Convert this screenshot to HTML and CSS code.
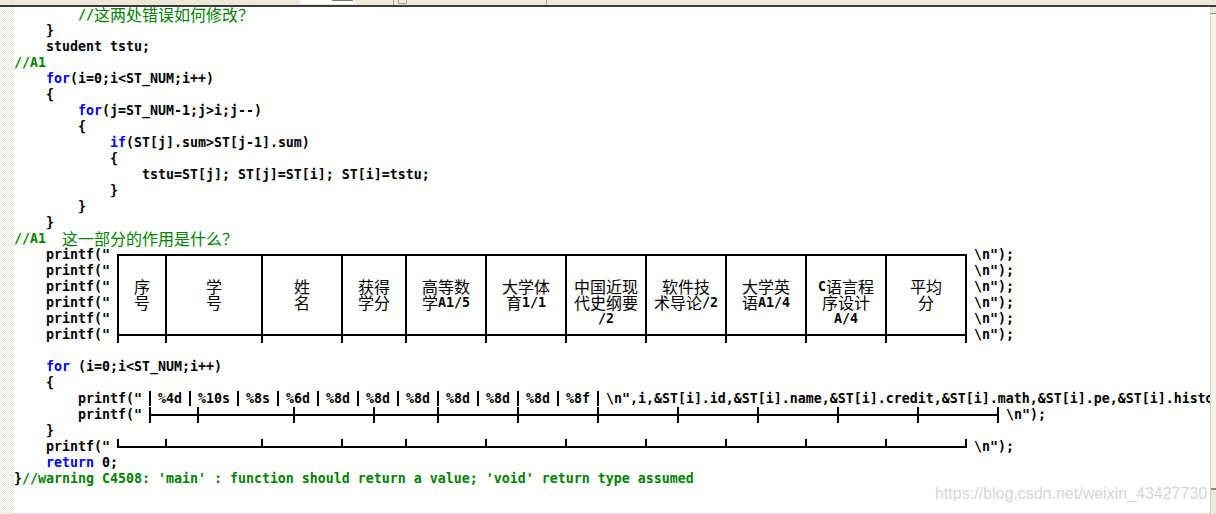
FILE: index.html
```html
<!DOCTYPE html>
<html lang="zh">
<head>
    <meta charset="UTF-8">
    <meta name="viewport" content="width=device-width, initial-scale=1.0">
    <title>student.cpp</title>
    <link rel="stylesheet" href="styles.css">
</head>
<body>
    <div class="window">
        <!-- toolbar remains at the top -->
        <div class="toolbar">
            <span class="tb-field"><span class="tb-field-bar"></span></span>
            <span class="tb-sep tb-sep-a"></span>
            <span class="tb-glyph"></span>
            <span class="tb-sep tb-sep-b"></span>
        </div>

        <div class="editor">
            <div class="gutter"></div>

            <div class="code">
                <div class="ln">        <span class="cm">//<span class="zh">这两处错误如何修改？</span></span></div>
                <div class="ln">    }</div>
                <div class="ln">    student tstu;</div>
                <div class="ln"><span class="cm">//A1</span></div>
                <div class="ln">    <span class="kw">for</span>(i=0;i&lt;ST_NUM;i++)</div>
                <div class="ln">    {</div>
                <div class="ln">        <span class="kw">for</span>(j=ST_NUM-1;j&gt;i;j--)</div>
                <div class="ln">        {</div>
                <div class="ln">            <span class="kw">if</span>(ST[j].sum&gt;ST[j-1].sum)</div>
                <div class="ln">            {</div>
                <div class="ln">                tstu=ST[j]; ST[j]=ST[i]; ST[i]=tstu;</div>
                <div class="ln">            }</div>
                <div class="ln">        }</div>
                <div class="ln">    }</div>
                <div class="ln"><span class="cm">//A1  <span class="zh">这一部分的作用是什么？</span></span></div>

                <!-- table header printed by six printf lines -->
                <div class="tbl-block">
                    <div class="tbl-left">
                        <div class="ln">    printf("</div>
                        <div class="ln">    printf("</div>
                        <div class="ln">    printf("</div>
                        <div class="ln">    printf("</div>
                        <div class="ln">    printf("</div>
                        <div class="ln">    printf("</div>
                    </div>
                    <div class="thead">
                        <div class="thead-inner">
                            <div class="th w3"><div class="th-cap">
                                <div class="cl"><span class="zh">序</span></div>
                                <div class="cl"><span class="zh">号</span></div>
                            </div></div>
                            <div class="th w6"><div class="th-cap">
                                <div class="cl"><span class="zh">学</span></div>
                                <div class="cl"><span class="zh">号</span></div>
                            </div></div>
                            <div class="th w5"><div class="th-cap">
                                <div class="cl"><span class="zh">姓</span></div>
                                <div class="cl"><span class="zh">名</span></div>
                            </div></div>
                            <div class="th w4"><div class="th-cap">
                                <div class="cl"><span class="zh">获得</span></div>
                                <div class="cl"><span class="zh">学分</span></div>
                            </div></div>
                            <div class="th w5"><div class="th-cap">
                                <div class="cl"><span class="zh">高等数</span></div>
                                <div class="cl"><span class="zh">学</span>A1/5</div>
                            </div></div>
                            <div class="th w5"><div class="th-cap">
                                <div class="cl"><span class="zh">大学体</span></div>
                                <div class="cl"><span class="zh">育</span>1/1</div>
                            </div></div>
                            <div class="th w5"><div class="th-cap">
                                <div class="cl"><span class="zh">中国近现</span></div>
                                <div class="cl"><span class="zh">代史纲要</span></div>
                                <div class="cl">/2</div>
                            </div></div>
                            <div class="th w5"><div class="th-cap">
                                <div class="cl"><span class="zh">软件技</span></div>
                                <div class="cl"><span class="zh">术导论</span>/2</div>
                            </div></div>
                            <div class="th w5"><div class="th-cap">
                                <div class="cl"><span class="zh">大学英</span></div>
                                <div class="cl"><span class="zh">语</span>A1/4</div>
                            </div></div>
                            <div class="th w5"><div class="th-cap">
                                <div class="cl">C<span class="zh">语言程</span></div>
                                <div class="cl"><span class="zh">序设计</span></div>
                                <div class="cl">A/4</div>
                            </div></div>
                            <div class="th w5"><div class="th-cap">
                                <div class="cl"><span class="zh">平均</span></div>
                                <div class="cl"><span class="zh">分</span></div>
                            </div></div>
                        </div>
                    </div>
                    <div class="tbl-right">
                        <div class="ln">\n");</div>
                        <div class="ln">\n");</div>
                        <div class="ln">\n");</div>
                        <div class="ln">\n");</div>
                        <div class="ln">\n");</div>
                        <div class="ln">\n");</div>
                    </div>
                </div>

                <div class="ln"></div>
                <div class="ln">    <span class="kw">for</span> (i=0;i&lt;ST_NUM;i++)</div>
                <div class="ln">    {</div>
                <div class="ln">        printf("<span class="vb"></span>%4d<span class="vb"></span>%10s<span class="vb"></span>%8s<span class="vb"></span>%6d<span class="vb"></span>%8d<span class="vb"></span>%8d<span class="vb"></span>%8d<span class="vb"></span>%8d<span class="vb"></span>%8d<span class="vb"></span>%8d<span class="vb"></span>%8f<span class="vb"></span>\n",i,&amp;ST[i].id,&amp;ST[i].name,&amp;ST[i].credit,&amp;ST[i].math,&amp;ST[i].pe,&amp;ST[i].history,&amp;ST[i].soft,&amp;ST[i].english,&amp;ST[i].c,&amp;ST[i].ave);</div>
                <div class="ln">        printf("<span class="rule rule-mid"><span class="seg w3"></span><span class="seg w6"></span><span class="seg w5"></span><span class="seg w4"></span><span class="seg w5"></span><span class="seg w5"></span><span class="seg w5"></span><span class="seg w5"></span><span class="seg w5"></span><span class="seg w5"></span><span class="seg end"></span></span>\n");</div>
                <div class="ln">    }</div>
                <div class="ln">    printf("<span class="rule rule-bot"><span class="seg w3"></span><span class="seg w6"></span><span class="seg w5"></span><span class="seg w4"></span><span class="seg w5"></span><span class="seg w5"></span><span class="seg w5"></span><span class="seg w5"></span><span class="seg w5"></span><span class="seg w5"></span><span class="seg end"></span></span>\n");</div>
                <div class="ln">    <span class="kw">return</span> 0;</div>
                <div class="ln">}<span class="cm">//warning C4508: 'main' : function should return a value; 'void' return type assumed</span></div>
            </div>

            <div class="vscroll">
                <div class="vs-arrow"></div>
                <div class="vs-track"></div>
                <div class="vs-thumb"></div>
            </div>
        </div>

        <div class="watermark">https://blog.csdn.net/weixin_43427730</div>
    </div>
</body>
</html>
```

FILE: styles.css
```css
body {
    margin: 0;
    background-color: #ffffff;
}

.window {
    position: relative;
    width: 1216px;
    height: 514px;
    overflow: hidden;
    background-color: #ffffff;
}

/* Toolbar strip */
.toolbar {
    display: flex;
    height: 5px;
    background-color: #ece9d8;
    border-bottom: 2px solid #3c3c3c;
}

.tb-field {
    display: block;
    margin-left: 300px;
    width: 55px;
    height: 4px;
    background-color: #ffffff;
}

.tb-field-bar {
    display: block;
    margin-left: 32px;
    width: 21px;
    height: 1px;
    background-color: #7a7869;
}

.tb-sep {
    display: block;
    width: 1px;
    height: 5px;
    background-color: #a6a393;
}

.tb-sep-a {
    margin-left: 38px;
}

.tb-glyph {
    display: block;
    margin-left: 4px;
    width: 7px;
    height: 3px;
    border: 1px solid #a6a393;
    border-top: none;
}

.tb-sep-b {
    margin-left: 139px;
}

/* Editor */
.editor {
    display: flex;
    height: 507px;
}

.gutter {
    width: 14px;
    flex: none;
    background: repeating-conic-gradient(#e6e5de 0 25%, #ffffff 0 50%) 0 0 / 2px 2px;
}

.code {
    flex: 1;
    height: 506px;
    overflow: hidden;
    border-bottom: 1px dotted #c4c4c4;
    font-family: "DejaVu Sans Mono", monospace;
    font-weight: bold;
    font-size: 13.29px;
    line-height: 16px;
    color: #000000;
}

.ln {
    height: 16px;
    white-space: pre;
}

.kw {
    color: #0000ff;
}

.cm {
    color: #008000;
}

.zh {
    font-family: "Noto Sans CJK SC", sans-serif;
    font-weight: normal;
    font-size: 16px;
    line-height: 0;
    vertical-align: -2px;
}

/* Header table */
.tbl-block {
    display: flex;
}

.tbl-left {
    width: 96px;
    flex: none;
}

.thead {
    width: 864px;
    height: 96px;
    flex: none;
    padding: 7px 7px 0;
    box-sizing: border-box;
}

.thead-inner {
    display: flex;
    height: 89px;
    box-sizing: border-box;
    border-top: 2px solid #000000;
    border-right: 2px solid #000000;
}

.th {
    flex: none;
    box-sizing: border-box;
    border-left: 2px solid #000000;
}

.th-cap {
    height: 80px;
    box-sizing: border-box;
    padding-top: 23px;
    border-bottom: 2px solid #000000;
}

.cl {
    height: 16px;
    text-align: center;
    white-space: pre;
}

.w3 { width: 48px; }
.w4 { width: 64px; }
.w5 { width: 80px; }
.w6 { width: 96px; }

/* Box drawing in printf strings */
.vb {
    display: inline-block;
    width: 16px;
    height: 16px;
    vertical-align: top;
    background: linear-gradient(#000, #000) 7px 0 / 2px 15px no-repeat;
}

.rule {
    display: inline-flex;
    height: 16px;
    padding: 0 7px;
    vertical-align: top;
}

.seg {
    display: block;
    flex: none;
    height: 16px;
}

.seg.end {
    width: 82px;
}

.rule-mid .seg {
    background:
        linear-gradient(#000, #000) 0 7px / 100% 2px no-repeat,
        linear-gradient(#000, #000) 0 0 / 2px 16px no-repeat;
}

.rule-mid .seg.end {
    background:
        linear-gradient(#000, #000) 0 7px / 100% 2px no-repeat,
        linear-gradient(#000, #000) 0 0 / 2px 16px no-repeat,
        linear-gradient(#000, #000) 100% 0 / 2px 16px no-repeat;
}

.rule-bot .seg {
    background:
        linear-gradient(#000, #000) 0 7px / 100% 2px no-repeat,
        linear-gradient(#000, #000) 0 0 / 2px 9px no-repeat;
}

.rule-bot .seg.end {
    background:
        linear-gradient(#000, #000) 0 7px / 100% 2px no-repeat,
        linear-gradient(#000, #000) 0 0 / 2px 9px no-repeat,
        linear-gradient(#000, #000) 100% 0 / 2px 9px no-repeat;
}

/* Vertical scrollbar, only a sliver is visible */
.vscroll {
    width: 5px;
    flex: none;
    display: flex;
    flex-direction: column;
    background-color: #ece9d8;
    border-left: 1px solid #d9d6c6;
}

.vs-arrow {
    height: 6px;
    border-bottom: 1px solid #8a8778;
}

.vs-track {
    flex: 1;
    background-color: #f4f3ee;
}

.vs-thumb {
    height: 24px;
    border-top: 2px solid #8a8778;
    background-color: #ece9d8;
}

/* Blog watermark */
.watermark {
    position: absolute;
    left: 935px;
    top: 485px;
    font-family: "Liberation Sans", Arial, sans-serif;
    font-size: 16px;
    line-height: 18px;
    color: #d6d6d6;
    white-space: nowrap;
}
```
